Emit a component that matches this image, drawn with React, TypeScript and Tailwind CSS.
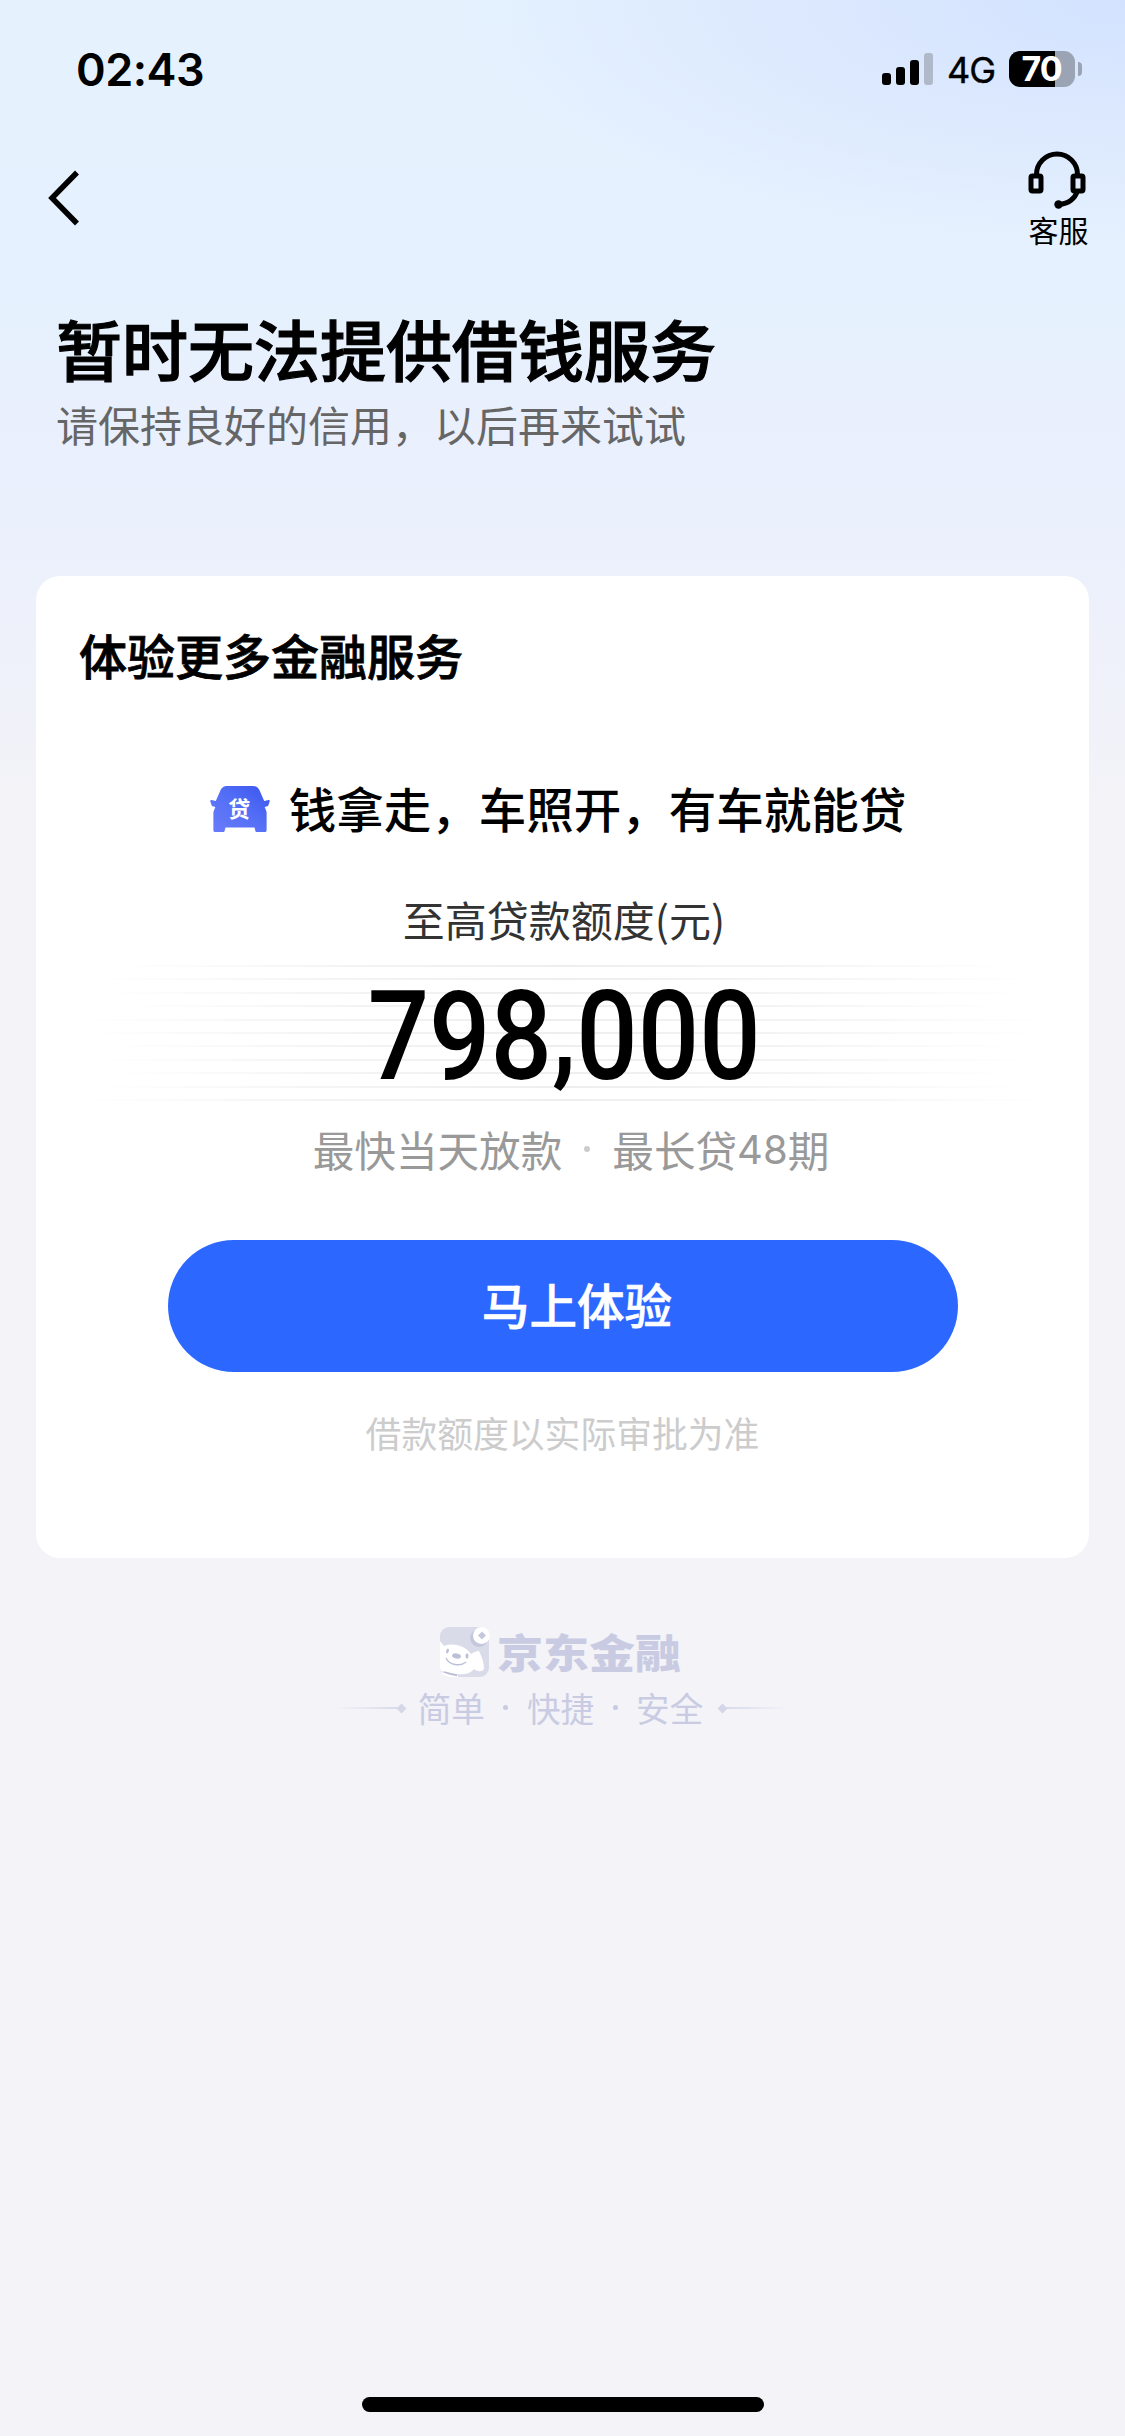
import { ReactNode } from 'react';

const FONT = "font-['Noto_Sans_CJK_SC',sans-serif]";

function StatusBar() {
    return (
        <div className="flex h-[138px] items-center justify-between pr-[43px] pl-[76px] font-['Inter',sans-serif]">
            <span className="text-[45px] font-semibold leading-none tracking-[-0.5px]">02:43</span>
            <div className="flex items-center">
                <div className="flex h-8 items-end gap-[5px]">
                    <i className="h-3 w-[9px] rounded-[3px] bg-black" />
                    <i className="h-[18px] w-[9px] rounded-[3px] bg-black" />
                    <i className="h-[25px] w-[9px] rounded-[3px] bg-black" />
                    <i className="h-8 w-[9px] rounded-[3px] bg-[#b0b9ca]" />
                </div>
                <span className="ml-[14px] w-[62px] pt-0.5 text-[36px] leading-none tracking-[-1px] [-webkit-text-stroke:0.4px]">4G</span>
                <div className="flex h-9 w-[66px] items-center justify-center rounded-[11px] bg-[linear-gradient(90deg,#000_70%,#9aa4b5_70%)] pr-px text-[34px] font-bold leading-none tracking-[-1px] text-white">
                    70
                </div>
                <i className="ml-[3px] h-3.5 w-1 rounded-r-full bg-[#9aa4b5]" />
            </div>
        </div>
    );
}

function Headset() {
    return (
        <svg className="mr-[3px] h-[58px] w-[58px]" viewBox="0 0 58 58" fill="none" stroke="#000" strokeWidth="5">
            <path d="M8.500 25V23.500a20.500 20.500 0 0 1 41 0V25" />
            <rect x="3" y="25" width="10" height="15" rx="1.500" />
            <rect x="45" y="25" width="10" height="15" rx="1.500" />
            <path d="M49 41c-2 6-8 12-18 12.500" />
            <circle cx="30.500" cy="53.500" r="4.200" fill="#000" stroke="none" />
        </svg>
    );
}

function CarIcon() {
    return (
        <div className="relative h-[48px] w-[60px]">
            <svg className="h-full w-full" viewBox="0 0 62 48" preserveAspectRatio="none">
                <defs>
                    <linearGradient id="car" x1="0" y1="1" x2="1" y2="0">
                        <stop offset="0" stopColor="#6a7bfb" />
                        <stop offset="0.5" stopColor="#5570f6" />
                        <stop offset="1" stopColor="#3a55ee" />
                    </linearGradient>
                </defs>
                <path
                    fill="url(#car)"
                    d="M18 1h26c4 0 6 1.500 7.500 5l4.500 10 4.500-1c1 0 1.500 1 1 2l-1.500 4-3.500 1 2 5v18c0 1.500-.5 2-2 2h-8c-1 0-1.500-.5-1.700-1.500L46 42.500H16l-.8 3c-.2 1-.7 1.500-1.700 1.500h-8c-1.500 0-2-.5-2-2V27l2-5L2 21 .500 17c-.5-1 0-2 1-2L6 16l4.500-10C12 2.500 14 1 18 1Z"
                />
            </svg>
            <span className="absolute inset-x-0 top-[10px] pr-px text-center text-[22px] font-bold leading-6 text-white">贷</span>
        </div>
    );
}

// faded hairlines running behind the amount
const lines = ['mx-10', 'mx-3', 'mx-6', 'mx-12', 'mx-0', 'mx-2', 'mx-8', 'mx-4', 'mx-10', 'mx-6', 'mx-0'];

function Amount({ children }: { children: ReactNode }) {
    return (
        <div className="relative mx-[40px] h-[136px]">
            <div className="flex h-full flex-col justify-between">
                {lines.map((m, idx) => (
                    <div key={idx} className={`h-0.5 bg-[linear-gradient(90deg,transparent,#f4f4f4_25%,#eeeeee_50%,#f4f4f4_75%,transparent)] ${m}`} />
                ))}
            </div>
            <div className="absolute inset-0 flex items-center justify-center pt-[7px] pl-1 font-['Roboto',sans-serif] text-[125px] font-medium leading-none">
                <span className="scale-x-[0.865]">{children}</span>
            </div>
        </div>
    );
}

function JoyLogo() {
    return (
        <svg className="h-[50px] w-[50px]" viewBox="0 0 50 50">
            <defs>
                <clipPath id="joy"><rect width="49" height="50" rx="9" /></clipPath>
            </defs>
            <g clipPath="url(#joy)">
                <rect width="50" height="50" fill="#d9dbe9" />
                <circle cx="39" cy="11" r="9" fill="#c3c8dd" />
                <path d="M0 14l4 5c7-3 20-2 27 8 3-2 6-3 8-3 3 6 5 12 5 18-2 3-6 3-10 0-4 5-11 6-17 5L0 44Z" fill="#fff" />
                <path d="M1 45l17 3.500v2H1Z" fill="#fff" />
                <path d="M4 45q6 2 13 3.500" stroke="#b9bed6" strokeWidth="1.500" fill="none" />
                <ellipse cx="16.500" cy="29" rx="4.500" ry="2.500" transform="rotate(10 16.500 29)" fill="#bcc1d8" />
                <ellipse cx="7.500" cy="24" rx="1.300" ry="2.500" fill="#bcc1d8" transform="rotate(20 7.500 24)" />
                <ellipse cx="27" cy="29" rx="1.500" ry="2.800" fill="#bcc1d8" />
                <path d="M6 31c3 7 14 9 20 4" stroke="#bcc1d8" strokeWidth="1.400" fill="none" />
            </g>
            <circle cx="41.500" cy="8.500" r="8.500" fill="#fff" />
            <path d="M42 4.500l4 4-4 4-4-4Z" fill="#c3c8dd" />
        </svg>
    );
}

export default function App() {
    return (
        <div className={`flex h-[2436px] w-[1125px] flex-col overflow-hidden bg-[#f3f3f8] bg-[radial-gradient(680px_250px_at_100%_0%,#d3e2ff_0%,#dce9fe_50%,#e5f2fe00_100%),linear-gradient(180deg,#e5f2fe_0px,#e5f1fe_300px,#e9f0fd_390px,#ebf0fc_540px,#f3f3f8_800px)] text-black ${FONT}`}>
            <StatusBar />

            <header className="flex h-[150px] items-start justify-between pr-[36px] pl-[46px]">
                <svg className="mt-[31px] h-[58px] w-[36px]" viewBox="0 0 36 58" fill="none" stroke="#000" strokeWidth="5.500">
                    <path d="M31 3.500L6 29l25 25.500" />
                </svg>
                <div className="mt-[13px] flex flex-col items-center">
                    <Headset />
                    <span className="text-[30px] leading-[40px]">客服</span>
                </div>
            </header>

            <section className="h-[288px] px-[56px] pt-[11px]">
                <h1 className="text-[66px] font-medium leading-[96px] [-webkit-text-stroke:1.2px]">暂时无法提供借钱服务</h1>
                <p className="pt-px text-[42px] leading-[56px] text-[#666]">请保持良好的信用，以后再来试试</p>
            </section>

            <main className="mx-9 h-[982px] rounded-[24px] bg-white">
                <h2 className="px-[43px] pt-[42px] text-[48px] font-medium leading-[72px] [-webkit-text-stroke:0.8px]">体验更多金融服务</h2>
                <div className="mt-[83px] flex h-[72px] items-center justify-center gap-[19px] pr-[9px]">
                    <CarIcon />
                    <span className="-mt-[3px] text-[47.5px] font-medium">钱拿走，车照开，有车就能贷</span>
                </div>
                <p className="mt-[44px] pl-[3px] text-center text-[42px] leading-[60px] text-[#333]">至高贷款额度(元)</p>
                <div className="h-4" />
                <Amount>
                    798<span className="relative -top-2">,</span>000
                </Amount>
                <p className="mt-[18px] flex h-[60px] items-center justify-center pl-[17px] text-[41.6px] leading-[60px] text-[#999]">
                    最快当天放款
                    <i className="mx-[22px] h-1.5 w-1.5 rounded-full bg-[#ccc]" />
                    最长贷<span className="pt-0.5 font-['Inter',sans-serif] text-[40px]">48</span>期
                </p>
                <button className="mx-auto mt-[61px] flex h-[132px] w-[790px] items-center justify-center rounded-full bg-[#2c68ff] pb-1 pl-[29px] text-[47.6px] font-medium text-white [-webkit-text-stroke:0.6px]">
                    马上体验
                </button>
                <p className="mt-[34px] text-center text-[35.8px] leading-[52px] text-[#ccc]">借款额度以实际审批为准</p>
            </main>

            <footer className="mt-[69px] flex flex-col text-[#c9cbe3]">
                <div className="flex h-[50px] items-center gap-[7px] pl-[440px]">
                    <JoyLogo />
                    <span className="-mt-0.5 origin-left scale-x-[1.15] text-[40px] font-extrabold leading-none">京东金融</span>
                </div>
                <div className="mt-[5px] flex h-[52px] items-center justify-center pr-px text-[33.6px]">
                    <i className="h-0.5 w-[64px] bg-linear-to-r from-transparent to-[#d9daea]" />
                    <i className="h-[7px] w-[7px] rotate-45 bg-[#d5d7e8]" />
                    <span className="mr-4 ml-[13px] flex items-center">
                        简单
                        <i className="mx-[18.5px] h-[5px] w-[5px] rounded-full bg-[#c9cbe3]" />
                        快捷
                        <i className="mx-[18.5px] h-[5px] w-[5px] rounded-full bg-[#c9cbe3]" />
                        安全
                    </span>
                    <i className="h-[7px] w-[7px] rotate-45 bg-[#d5d7e8]" />
                    <i className="h-0.5 w-[64px] bg-linear-to-r from-[#d9daea] to-transparent" />
                </div>
            </footer>

            <div className="mx-auto mt-auto mb-6 h-[15px] w-[402px] rounded-full bg-black" />
        </div>
    );
}
